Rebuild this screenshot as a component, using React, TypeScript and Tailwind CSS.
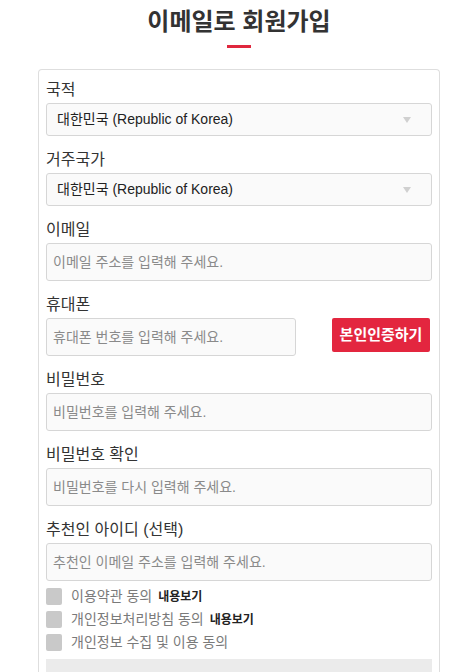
const font = { fontFamily: '"Liberation Sans", "Noto Sans CJK KR", sans-serif' };

function Label({ children }: { children: React.ReactNode }) {
  return <div className="mt-[14px] mb-[3px] h-5 leading-5 text-[16px] text-[#333]">{children}</div>;
}

function SelectBox({ value }: { value: string }) {
  return (
    <div className="h-[33px] flex items-center justify-between rounded-[3px] border border-[#d6d6d6] bg-[#fafafa] pl-[10px] pr-[20px]">
      <span className="text-[14px] text-[#222]">{value}</span>
      <svg width="8" height="6" viewBox="0 0 8 6">
        <path d="M0 0 L8 0 L4 6 Z" fill="#d0d0d0" />
      </svg>
    </div>
  );
}

function TextInput({ placeholder, className = '' }: { placeholder: string; className?: string }) {
  return (
    <input
      placeholder={placeholder}
      className={
        'h-[38px] rounded-[3px] border border-[#d6d6d6] bg-[#fafafa] px-[6px] text-[14px] text-[#333] placeholder:text-[#8a8a8a] outline-none ' +
        className
      }
      style={font}
    />
  );
}

function Agree({ text, more }: { text: string; more?: boolean }) {
  return (
    <div className="h-[23px] flex items-center">
      <span className="w-4 h-[17px] rounded-[2px] bg-[#c9c9c9]" />
      <span className="ml-[9px] text-[14px] text-[#7a7a7a]">{text}</span>
      {more && <span className="ml-[6px] text-[12px] font-bold text-[#222]">내용보기</span>}
    </div>
  );
}

export default function App() {
  return (
    <div className="min-h-screen bg-white overflow-hidden" style={font}>
      <div className="ml-[38px] w-[402px]">
        <h1 className="pt-[6px] text-center text-[24px] leading-[32px] font-bold text-[#333]">이메일로 회원가입</h1>
        <div className="mx-auto mt-[7px] w-6 h-[3px] bg-[#e0283e]" />

        <div className="mt-[21px] rounded-[4px] border border-b-0 border-[#dedede] px-[7px] pt-[-4px] h-[620px]">
          <div className="-mt-[4px]" />
          <Label>국적</Label>
          <SelectBox value="대한민국 (Republic of Korea)" />

          <Label>거주국가</Label>
          <SelectBox value="대한민국 (Republic of Korea)" />

          <Label>이메일</Label>
          <TextInput placeholder="이메일 주소를 입력해 주세요." className="w-full" />

          <Label>휴대폰</Label>
          <div className="flex items-start justify-between">
            <TextInput placeholder="휴대폰 번호를 입력해 주세요." className="w-[250px]" />
            <button className="mr-[2px] h-[34px] w-[98px] rounded-[2px] bg-[#e3263f] text-[15px] font-bold text-white">
              본인인증하기
            </button>
          </div>

          <Label>비밀번호</Label>
          <TextInput placeholder="비밀번호를 입력해 주세요." className="w-full" />

          <Label>비밀번호 확인</Label>
          <TextInput placeholder="비밀번호를 다시 입력해 주세요." className="w-full" />

          <Label>추천인 아이디 (선택)</Label>
          <TextInput placeholder="추천인 이메일 주소를 입력해 주세요." className="w-full" />

          <div className="mt-[4px]">
            <Agree text="이용약관 동의" more />
            <Agree text="개인정보처리방침 동의" more />
            <Agree text="개인정보 수집 및 이용 동의" />
          </div>
          <div className="mt-[5px] h-[80px] bg-[#ebebeb]" />
        </div>
      </div>
    </div>
  );
}
